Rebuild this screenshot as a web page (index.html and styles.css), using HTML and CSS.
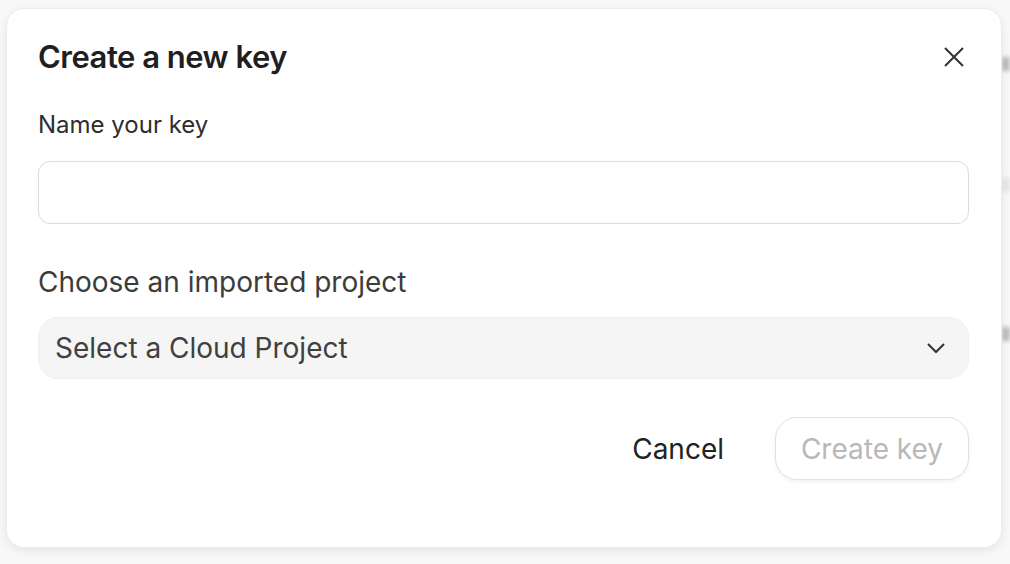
FILE: index.html
```html
<!DOCTYPE html>
<html>
<head>
  <title>Create a new key</title>
  <link rel="stylesheet" href="styles.css">
</head>
<body>
  <div class="backdrop">
    <span class="ghost ghost-1"></span>
    <span class="ghost ghost-2"></span>
    <span class="ghost ghost-3"></span>
  </div>
  <div class="dialog">
    <div class="dialog-header">
      <h2 class="dialog-title">Create a new key</h2>
      <button class="close-btn" aria-label="Close">
        <svg width="22" height="22" viewBox="0 0 22 22">
          <path d="M2 2 L20 20 M20 2 L2 20" stroke="#333" stroke-width="2" fill="none"/>
        </svg>
      </button>
    </div>
    <label class="field-label small">Name your key</label>
    <input class="text-input" type="text">
    <label class="field-label">Choose an imported project</label>
    <div class="select">
      <span>Select a Cloud Project</span>
      <svg width="20" height="12" viewBox="0 0 20 12">
        <path d="M2 2 L10 10 L18 2" stroke="#333" stroke-width="2" fill="none"/>
      </svg>
    </div>
    <div class="actions">
      <button class="btn-cancel">Cancel</button>
      <button class="btn-create" disabled>Create key</button>
    </div>
  </div>
</body>
</html>
```

FILE: styles.css
```css
body {
  margin: 0;
  background-color: #f8f8f8;
  font-family: Inter, "Noto Sans", sans-serif;
  height: 564px;
  overflow: hidden;
  position: relative;
}

.backdrop .ghost {
  position: absolute;
  right: 0;
  width: 8px;
  height: 14px;
  background-color: #bbb;
  filter: blur(2px);
}

.ghost-1 { top: 57px; }
.ghost-2 { top: 178px; opacity: 0.3; }
.ghost-3 { top: 327px; }

.dialog {
  position: absolute;
  top: 8px;
  left: 6px;
  width: 996px;
  height: 540px;
  box-sizing: border-box;
  padding: 28px 32px 0 31px;
  background-color: #fff;
  border: 1px solid #ececec;
  border-radius: 18px;
  box-shadow: 0 3px 8px rgba(0, 0, 0, 0.08);
}

.dialog-header {
  display: flex;
  justify-content: space-between;
  align-items: center;
  height: 40px;
}

.dialog-title {
  margin: 0;
  font-size: 31px;
  line-height: 40px;
  font-weight: 600;
  letter-spacing: -0.5px;
  color: #1f1f1f;
}

.close-btn {
  background: none;
  border: none;
  padding: 0;
  margin-right: 4px;
  display: flex;
  cursor: pointer;
}

.field-label {
  display: block;
  margin-top: 41px;
  font-size: 28px;
  line-height: 34px;
  color: #3c3c3c;
}

.field-label.small {
  margin-top: 33px;
  font-size: 24px;
  line-height: 29px;
  color: #2e2e2e;
}

.text-input {
  display: block;
  width: 100%;
  box-sizing: border-box;
  height: 63px;
  margin: 22px 0 0 0;
  border: 1.5px solid #dcdcdc;
  border-radius: 12px;
  background-color: #fff;
  font-size: 20px;
}

.select {
  display: flex;
  justify-content: space-between;
  align-items: center;
  height: 62px;
  box-sizing: border-box;
  margin-top: 18px;
  padding: 0 22px 0 16px;
  background-color: #f5f5f5;
  border: 1px solid #efefef;
  border-radius: 20px;
  font-size: 28px;
  color: #404040;
}

.actions {
  display: flex;
  justify-content: flex-end;
  align-items: center;
  gap: 51px;
  margin-top: 38px;
}

.btn-cancel {
  background: none;
  border: none;
  padding: 0;
  font-family: inherit;
  font-size: 28px;
  color: #222;
  cursor: pointer;
}

.btn-create {
  width: 194px;
  height: 63px;
  background-color: #fff;
  border: 1.5px solid #e1e1e1;
  border-radius: 22px;
  font-family: inherit;
  font-size: 28px;
  color: #b8b8b8;
  box-shadow: 0 2px 4px rgba(0, 0, 0, 0.05);
}
```
